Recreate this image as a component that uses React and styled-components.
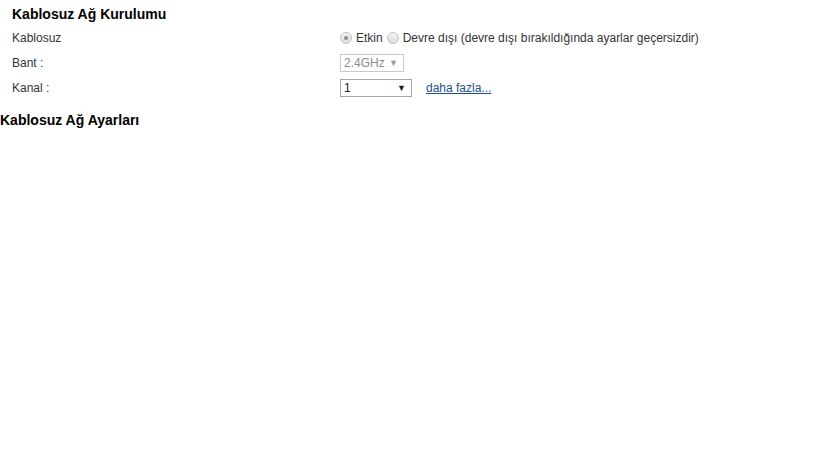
import React from 'react'
import styled, { createGlobalStyle } from 'styled-components'

const Global = createGlobalStyle`
  body {
    margin: 0;
    background: #fff;
    font-family: Arial, "Liberation Sans", sans-serif;
    font-size: 12px;
    color: #222;
  }
`

const Page = styled.div`
  width: 819px;
  height: 460px;
  padding-top: 6px;
  box-sizing: border-box;
`

const Title = styled.div`
  font-size: 14px;
  font-weight: bold;
  color: #000;
  padding-left: ${p => p.$indent || 0}px;
  line-height: 16px;
`

const Form = styled.div`
  display: grid;
  grid-template-columns: 328px auto;
  grid-auto-rows: 25px;
  padding: 3px 0 12px 12px;
  align-items: center;
`

const Label = styled.div`
  color: #333;
  line-height: 14px;
`

const Field = styled.div`
  display: flex;
  align-items: center;
  gap: 2px;
  color: #333;
`

const Radio = styled.span`
  width: 12px;
  height: 12px;
  box-sizing: border-box;
  border-radius: 50%;
  border: 1px solid #c3c3c3;
  background: linear-gradient(#f2f2f2, #dcdcdc);
  display: inline-flex;
  align-items: center;
  justify-content: center;
  margin-right: 2px;
  &::after {
    content: '';
    width: 4px;
    height: 4px;
    border-radius: 50%;
    background: ${p => (p.$checked ? '#8a8a8a' : 'transparent')};
  }
`

const Choice = styled.span`
  margin-right: 2px;
`

const SelectBox = styled.div`
  width: ${p => p.$w}px;
  height: 18px;
  box-sizing: border-box;
  border: 1px solid ${p => (p.$disabled ? '#c8c8c8' : '#a6a6a6')};
  display: flex;
  align-items: center;
  justify-content: space-between;
  padding: 0 5px 0 3px;
  color: ${p => (p.$disabled ? '#8c8c8c' : '#222')};
  background: #fff;
`

const Arrow = styled.span`
  font-size: 9px;
  color: ${p => (p.$disabled ? '#9a9a9a' : '#222')};
`

const More = styled.a`
  color: #1d4f8c;
  text-decoration: underline;
  margin-left: 12px;
  cursor: pointer;
`

export default function App() {
  return (
    <Page>
      <Global />
      <Title $indent={12}>Kablosuz Ağ Kurulumu</Title>
      <Form>
        <Label>Kablosuz</Label>
        <Field>
          <Radio $checked />
          <Choice>Etkin</Choice>
          <Radio />
          <Choice>Devre dışı (devre dışı bırakıldığında ayarlar geçersizdir)</Choice>
        </Field>
        <Label>Bant :</Label>
        <Field>
          <SelectBox $w={64} $disabled>
            <span>2.4GHz</span>
            <Arrow $disabled>▼</Arrow>
          </SelectBox>
        </Field>
        <Label>Kanal :</Label>
        <Field>
          <SelectBox $w={72}>
            <span>1</span>
            <Arrow>▼</Arrow>
          </SelectBox>
          <More>daha fazla...</More>
        </Field>
      </Form>
      <Title>Kablosuz Ağ Ayarları</Title>
    </Page>
  )
}
